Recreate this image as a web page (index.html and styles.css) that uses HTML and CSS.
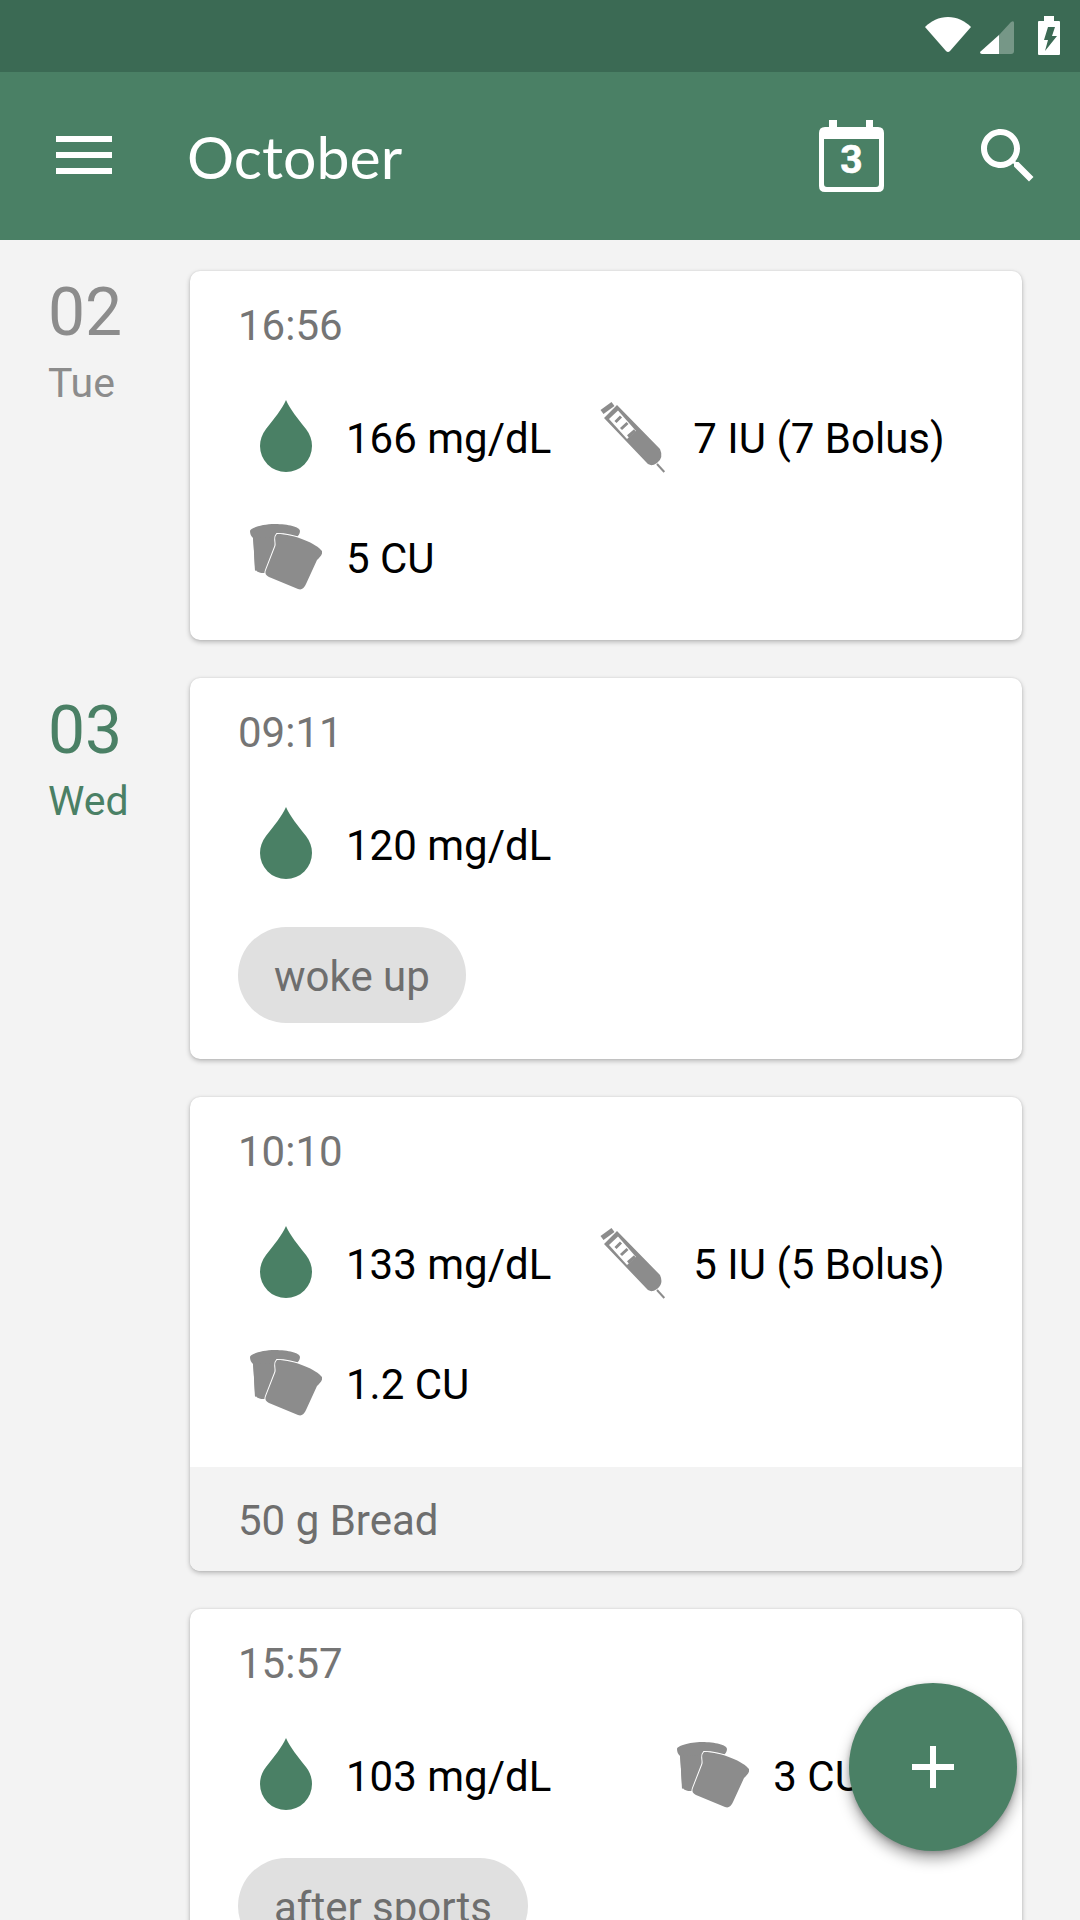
FILE: index.html
```html
<!DOCTYPE html>
<html lang="en">
<head>
<meta charset="utf-8">
<title>October</title>
<link rel="stylesheet" href="styles.css">
</head>
<body>
<svg class="defs" width="0" height="0" aria-hidden="true">
  <defs>
    <symbol id="drop" viewBox="0 0 52 72">
      <path d="M26 0C22 9 14 19 6 29C2 34 0 40 0 46A26 26 0 0 0 52 46C52 40 50 34 46 29C38 19 30 9 26 0Z"/>
    </symbol>
    <symbol id="bread" viewBox="0 0 72 66">
      <path d="M0 7C0 4 12 0 25 0C38 0 50 3 50 7C50 10 48 12 47 13L5 47C4 30 4 20 3 14C1 12 0 10 0 7Z"/>
      <path d="M3 14L5 42C5 47 8 49 13 49H22L40 12Z"/>
      <path class="bread-front" d="M27 10C45 10 67 20 72 27C73 30 70 33 67 36L56 60Q53 67 48 65L19 53Q14 51 16 46L25 23C27 19 23 14 27 10Z"/>
    </symbol>
    <symbol id="syringe" viewBox="0 0 72 72">
      <path class="syr-cap" d="M5 11L16 3"/>
      <path d="M7 17L20 4L63 48Q67 57 60 62Q53 67 49 61Z"/>
      <path class="syr-window" d="M12 18L21 9.5L39 30L30 38Z"/>
      <path class="syr-line" d="M18.5 21L24 15.5M24 28L30.5 22M31 35.5L38 29.5"/>
      <path class="syr-needle" d="M60 63L67.3 71"/>
    </symbol>
  </defs>
</svg>

<div class="screen">
  <header class="status">
    <svg class="st-wifi" width="46" height="36" viewBox="0 0 46 36"><path d="M0 10C6 4 14 0 23 0S40 4 46 10L25 34Q23 36 21 34Z"/></svg>
    <svg class="st-signal" width="34" height="34" viewBox="0 0 34 34"><path class="dim" d="M19 34V15L31 2Q34 0 34 3V31Q34 34 31 34Z"/><path d="M0 32L19 15V34H2Q0 34 0 32Z"/></svg>
    <svg class="st-batt" width="22" height="39" viewBox="0 0 22 39"><path d="M6 0H16V5H21Q22 5 22 6V38Q22 39 21 39H1Q0 39 0 38V6Q0 5 1 5H6Z"/><path class="cut" d="M10 11H17L14 20H19L7 35L10 24H6Z"/></svg>
  </header>

  <nav class="toolbar">
    <svg class="tb-menu" width="56" height="38" viewBox="0 0 56 38"><rect width="56" height="6"/><rect y="16" width="56" height="6"/><rect y="32" width="56" height="6"/></svg>
    <h1 class="title">October</h1>
    <svg class="tb-cal" width="65" height="72" viewBox="0 0 65 72">
      <path d="M10 0H18V7H47V0H54V7H59Q65 7 65 13V66Q65 72 59 72H6Q0 72 0 66V13Q0 7 6 7H10ZM5 19V64Q5 67 8 67H57Q60 67 60 64V19Z" fill-rule="evenodd"/>
      <text class="cal-num" x="32.5" y="53" text-anchor="middle">3</text>
    </svg>
    <svg class="tb-search" width="72" height="72" viewBox="0 0 24 24"><path d="M15.5 14h-.79l-.28-.27C15.41 12.59 16 11.11 16 9.5 16 5.91 13.09 3 9.5 3S3 5.91 3 9.5 5.91 16 9.5 16c1.61 0 3.09-.59 4.23-1.57l.27.28v.79l5 4.99L20.49 19l-4.99-5zm-6 0C7.01 14 5 11.99 5 9.5S7.01 5 9.5 5 14 7.01 14 9.5 11.99 14 9.5 14z"/></svg>
  </nav>

  <main class="list">
    <section class="day">
      <div class="date">
        <div class="date-num">02</div>
        <div class="date-name">Tue</div>
      </div>
      <div class="cards">
        <article class="card">
          <div class="time">16:56</div>
          <div class="row">
            <div class="item"><span class="ico"><svg class="i-drop"><use href="#drop"/></svg></span><span class="val">166 mg/dL</span></div>
            <div class="item after-sugar"><span class="ico"><svg class="i-syr"><use href="#syringe"/></svg></span><span class="val">7 IU (7 Bolus)</span></div>
          </div>
          <div class="row">
            <div class="item"><span class="ico"><svg class="i-bread"><use href="#bread"/></svg></span><span class="val">5 CU</span></div>
          </div>
        </article>
      </div>
    </section>

    <section class="day">
      <div class="date today">
        <div class="date-num">03</div>
        <div class="date-name">Wed</div>
      </div>
      <div class="cards">
        <article class="card">
          <div class="time">09:11</div>
          <div class="row">
            <div class="item"><span class="ico"><svg class="i-drop"><use href="#drop"/></svg></span><span class="val">120 mg/dL</span></div>
          </div>
          <div class="chip">woke up</div>
        </article>

        <article class="card has-foot">
          <div class="time">10:10</div>
          <div class="row">
            <div class="item"><span class="ico"><svg class="i-drop"><use href="#drop"/></svg></span><span class="val">133 mg/dL</span></div>
            <div class="item after-sugar"><span class="ico"><svg class="i-syr"><use href="#syringe"/></svg></span><span class="val">5 IU (5 Bolus)</span></div>
          </div>
          <div class="row">
            <div class="item"><span class="ico"><svg class="i-bread"><use href="#bread"/></svg></span><span class="val">1.2 CU</span></div>
          </div>
          <div class="foot">50 g Bread</div>
        </article>

        <article class="card">
          <div class="time">15:57</div>
          <div class="row">
            <div class="item"><span class="ico"><svg class="i-drop"><use href="#drop"/></svg></span><span class="val">103 mg/dL</span></div>
            <div class="item after-sugar-wide"><span class="ico"><svg class="i-bread"><use href="#bread"/></svg></span><span class="val">3 CU</span></div>
          </div>
          <div class="chip">after sports</div>
        </article>
      </div>
    </section>
  </main>

  <button class="fab" type="button" aria-label="Add">
    <svg width="42" height="42" viewBox="0 0 42 42"><path d="M18 0H24V18H42V24H24V42H18V24H0V18H18Z"/></svg>
  </button>
</div>
</body>
</html>
```

FILE: styles.css
```css
* { box-sizing: border-box; }
html, body { margin: 0; padding: 0; }
body { font-family: Roboto, "Liberation Sans", sans-serif; background: #f3f3f3; }
.defs { position: absolute; }
.screen { position: relative; width: 1080px; height: 1920px; overflow: hidden; background: #f3f3f3; }

.status { height: 72px; background: #3b6a54; display: flex; align-items: flex-start; padding-right: 20px; justify-content: flex-end; }
.status svg { fill: #fff; display: block; }
.st-wifi { margin-top: 17px; }
.st-signal { margin: 20px 0 0 9px; }
.st-batt { margin: 16px 0 0 24px; }
.dim { opacity: .3; }
.cut { fill: #3b6a54; }

.toolbar { height: 168px; background: #4a8065; display: flex; align-items: center; color: #fff; }
.toolbar svg { fill: #fff; display: block; flex: none; }
.tb-menu { margin: -2px 0 0 56px; }
.title { margin: 0 0 0 75px; flex: 1; font-family: Lato, sans-serif; font-weight: 400; font-size: 59px; line-height: 1; }
.tb-cal { margin-right: 88px; }
.cal-num { font-family: Roboto, sans-serif; font-weight: 700; font-size: 39px; fill: #fff; stroke: #fff; stroke-width: .6; }
.tb-search { margin-right: 36px; }

.list { padding-top: 31px; }
.day { display: flex; margin-bottom: 38px; }
.date { width: 190px; padding-left: 48px; color: #8c8c8c; flex: none; }
.date-num { font-size: 66px; line-height: 72px; margin-top: 6px; }
.date-name { font-size: 41px; line-height: 50px; margin-top: 9px; }
.today { color: #4a8065; }
.today .date-num { margin-top: 17px; }
.cards { width: 832px; display: flex; flex-direction: column; gap: 38px; }

.card { background: #fff; border-radius: 10px; padding-bottom: 22px; box-shadow: 0 2px 5px rgba(0,0,0,.25), 0 0 2px rgba(0,0,0,.1); overflow: hidden; }
.card.has-foot { padding-bottom: 0; }
.time { padding: 30px 0 0 48px; height: 79px; font-size: 42px; line-height: 50px; color: #757575; }
.row { display: flex; height: 120px; padding-left: 60px; align-items: center; }
.time + .row { margin-top: 28px; }
.item { display: flex; align-items: center; flex: none; }
.ico { width: 72px; height: 80px; display: flex; align-items: center; justify-content: center; margin-right: 24px; flex: none; }
.val { font-size: 42px; line-height: 50px; color: #000; margin-top: 1px; }
.after-sugar { margin-left: 46px; }
.after-sugar-wide { margin-left: 126px; }
.i-drop { width: 52px; height: 72px; fill: #4a8065; margin-top: -4px; }
.i-bread { width: 72px; height: 66px; fill: #8c8c8c; margin-top: -3px; }
.i-syr { width: 72px; height: 72px; fill: #8c8c8c; margin-top: -2px; }
.bread-front { stroke: #fff; stroke-width: 2; paint-order: stroke; }
.syr-cap { fill: none; stroke: #8c8c8c; stroke-width: 5; }
.syr-window { fill: #fff; }
.syr-line { fill: none; stroke: #8c8c8c; stroke-width: 3; }
.syr-needle { fill: none; stroke: #8c8c8c; stroke-width: 2; }

.chip { display: inline-block; margin: 22px 0 14px 48px; height: 96px; padding: 0 36px; border-radius: 48px; background: #e0e0e0; color: #6e6e6e; font-size: 42px; line-height: 99px; }
.foot { margin-top: 23px; height: 104px; background: #f3f3f3; padding-left: 48px; font-size: 42px; line-height: 107px; color: #6e6e6e; }

.fab { position: absolute; right: 63px; bottom: 69px; width: 168px; height: 168px; border: 0; padding: 0; border-radius: 50%; background: #4a8065; display: flex; align-items: center; justify-content: center; box-shadow: 0 8px 14px rgba(0,0,0,.35), 0 2px 5px rgba(0,0,0,.2); }
.fab svg { fill: #fff; display: block; }
```
